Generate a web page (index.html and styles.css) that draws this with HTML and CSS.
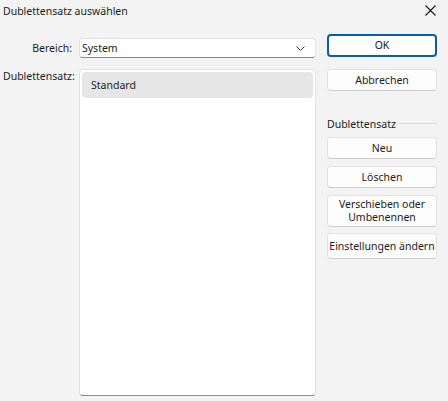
FILE: index.html
```html
<!DOCTYPE html>
<html lang="de">
<head>
<meta charset="utf-8">
<title>Dublettensatz auswählen</title>
<link rel="stylesheet" href="styles.css">
</head>
<body>
<div class="dialog">
  <div class="titlebar">
    <span class="title">Dublettensatz auswählen</span>
    <span class="close" aria-label="Schließen">
      <svg width="11" height="11" viewBox="0 0 11 11"><path d="M0.5 0.5 L10.5 10.5 M10.5 0.5 L0.5 10.5" stroke="#1a1a1a" stroke-width="1.1" fill="none"/></svg>
    </span>
  </div>
  <div class="main">
    <div class="form">
      <label class="label label-mid">Bereich:</label>
      <div class="select">
        <span>System</span>
        <svg class="chev" width="9" height="5" viewBox="0 0 9 5"><path d="M0.5 0.5 L4.5 4.5 L8.5 0.5" stroke="#333" stroke-width="1" fill="none"/></svg>
      </div>
      <label class="label label-top">Dublettensatz:</label>
      <div class="list">
        <div class="item selected">Standard</div>
      </div>
    </div>
    <div class="actions">
      <button class="btn btn-default">OK</button>
      <button class="btn">Abbrechen</button>
      <div class="group-title"><span>Dublettensatz</span><span class="rule"></span></div>
      <div class="group">
        <button class="btn">Neu</button>
        <button class="btn">Löschen</button>
        <button class="btn btn-tall">Verschieben oder<br>Umbenennen</button>
        <button class="btn btn-mid">Einstellungen ändern</button>
      </div>
    </div>
  </div>
</div>
</body>
</html>
```

FILE: styles.css
```css
* { box-sizing: border-box; }
html, body {
  margin: 0;
  padding: 0;
  background: #f3f3f3;
}
body {
  font-family: "Noto Sans", "Open Sans", sans-serif;
  font-size: 10.5px;
  color: #1b1b1b;
  width: 448px;
  height: 401px;
  overflow: hidden;
}
.dialog {
  display: flex;
  flex-direction: column;
  height: 401px;
}
.titlebar {
  height: 22px;
  display: flex;
  align-items: center;
  justify-content: space-between;
  padding: 0 12px 0 3px;
}
.title { line-height: 14px; }
.close { display: flex; margin-top: -1px; }
.main {
  display: flex;
  padding-top: 12px;
}
.form {
  display: grid;
  grid-template-columns: 79px 237px;
  grid-template-rows: 20px 327px;
  row-gap: 11px;
  padding-top: 4px;
}
.label {
  padding-left: 3px;
  line-height: 14px;
  white-space: nowrap;
}
.label-mid {
  align-self: center;
  text-align: right;
  padding-right: 7px;
}
.label-top {
  align-self: start;
  padding-top: 0px;
}
.select {
  display: flex;
  align-items: center;
  justify-content: space-between;
  background: #ffffff;
  border: 1px solid #e2e2e2;
  border-bottom-color: #8a8a8a;
  border-radius: 4px;
  padding: 0 10px 0 2px;
}
.chev { margin-top: 1px; }
.list {
  background: #ffffff;
  border: 1px solid #e2e2e2;
  border-bottom-color: #8a8a8a;
  border-radius: 4px;
  padding: 2px;
}
.item {
  height: 26px;
  line-height: 26px;
  padding-left: 9px;
  border-radius: 4px;
}
.item.selected { background: #e6e6e6; }
.actions {
  display: flex;
  flex-direction: column;
  width: 110px;
  margin-left: 11px;
}
.btn {
  font: inherit;
  color: #1b1b1b;
  background: #fdfdfd;
  border: 1px solid #e1e1e1;
  border-bottom-color: #cdcdcd;
  border-radius: 4px;
  height: 22px;
  padding: 0;
  line-height: 13px;
  text-align: center;
}
.btn-default {
  height: 23px;
  border: 2px solid #0a5ea8;
  margin-bottom: 12px;
}
.group-title {
  display: flex;
  align-items: center;
  margin-top: 26px;
  height: 14px;
  line-height: 14px;
}
.group-title .rule {
  flex: 1;
  height: 1px;
  background: #dcdcdc;
  margin-left: 3px;
  margin-top: -1px;
}
.group {
  display: flex;
  flex-direction: column;
  gap: 7px;
  margin-top: 6px;
}
.btn-tall { height: 32px; }
.btn-mid { height: 26px; margin-top: -1px; }
```
